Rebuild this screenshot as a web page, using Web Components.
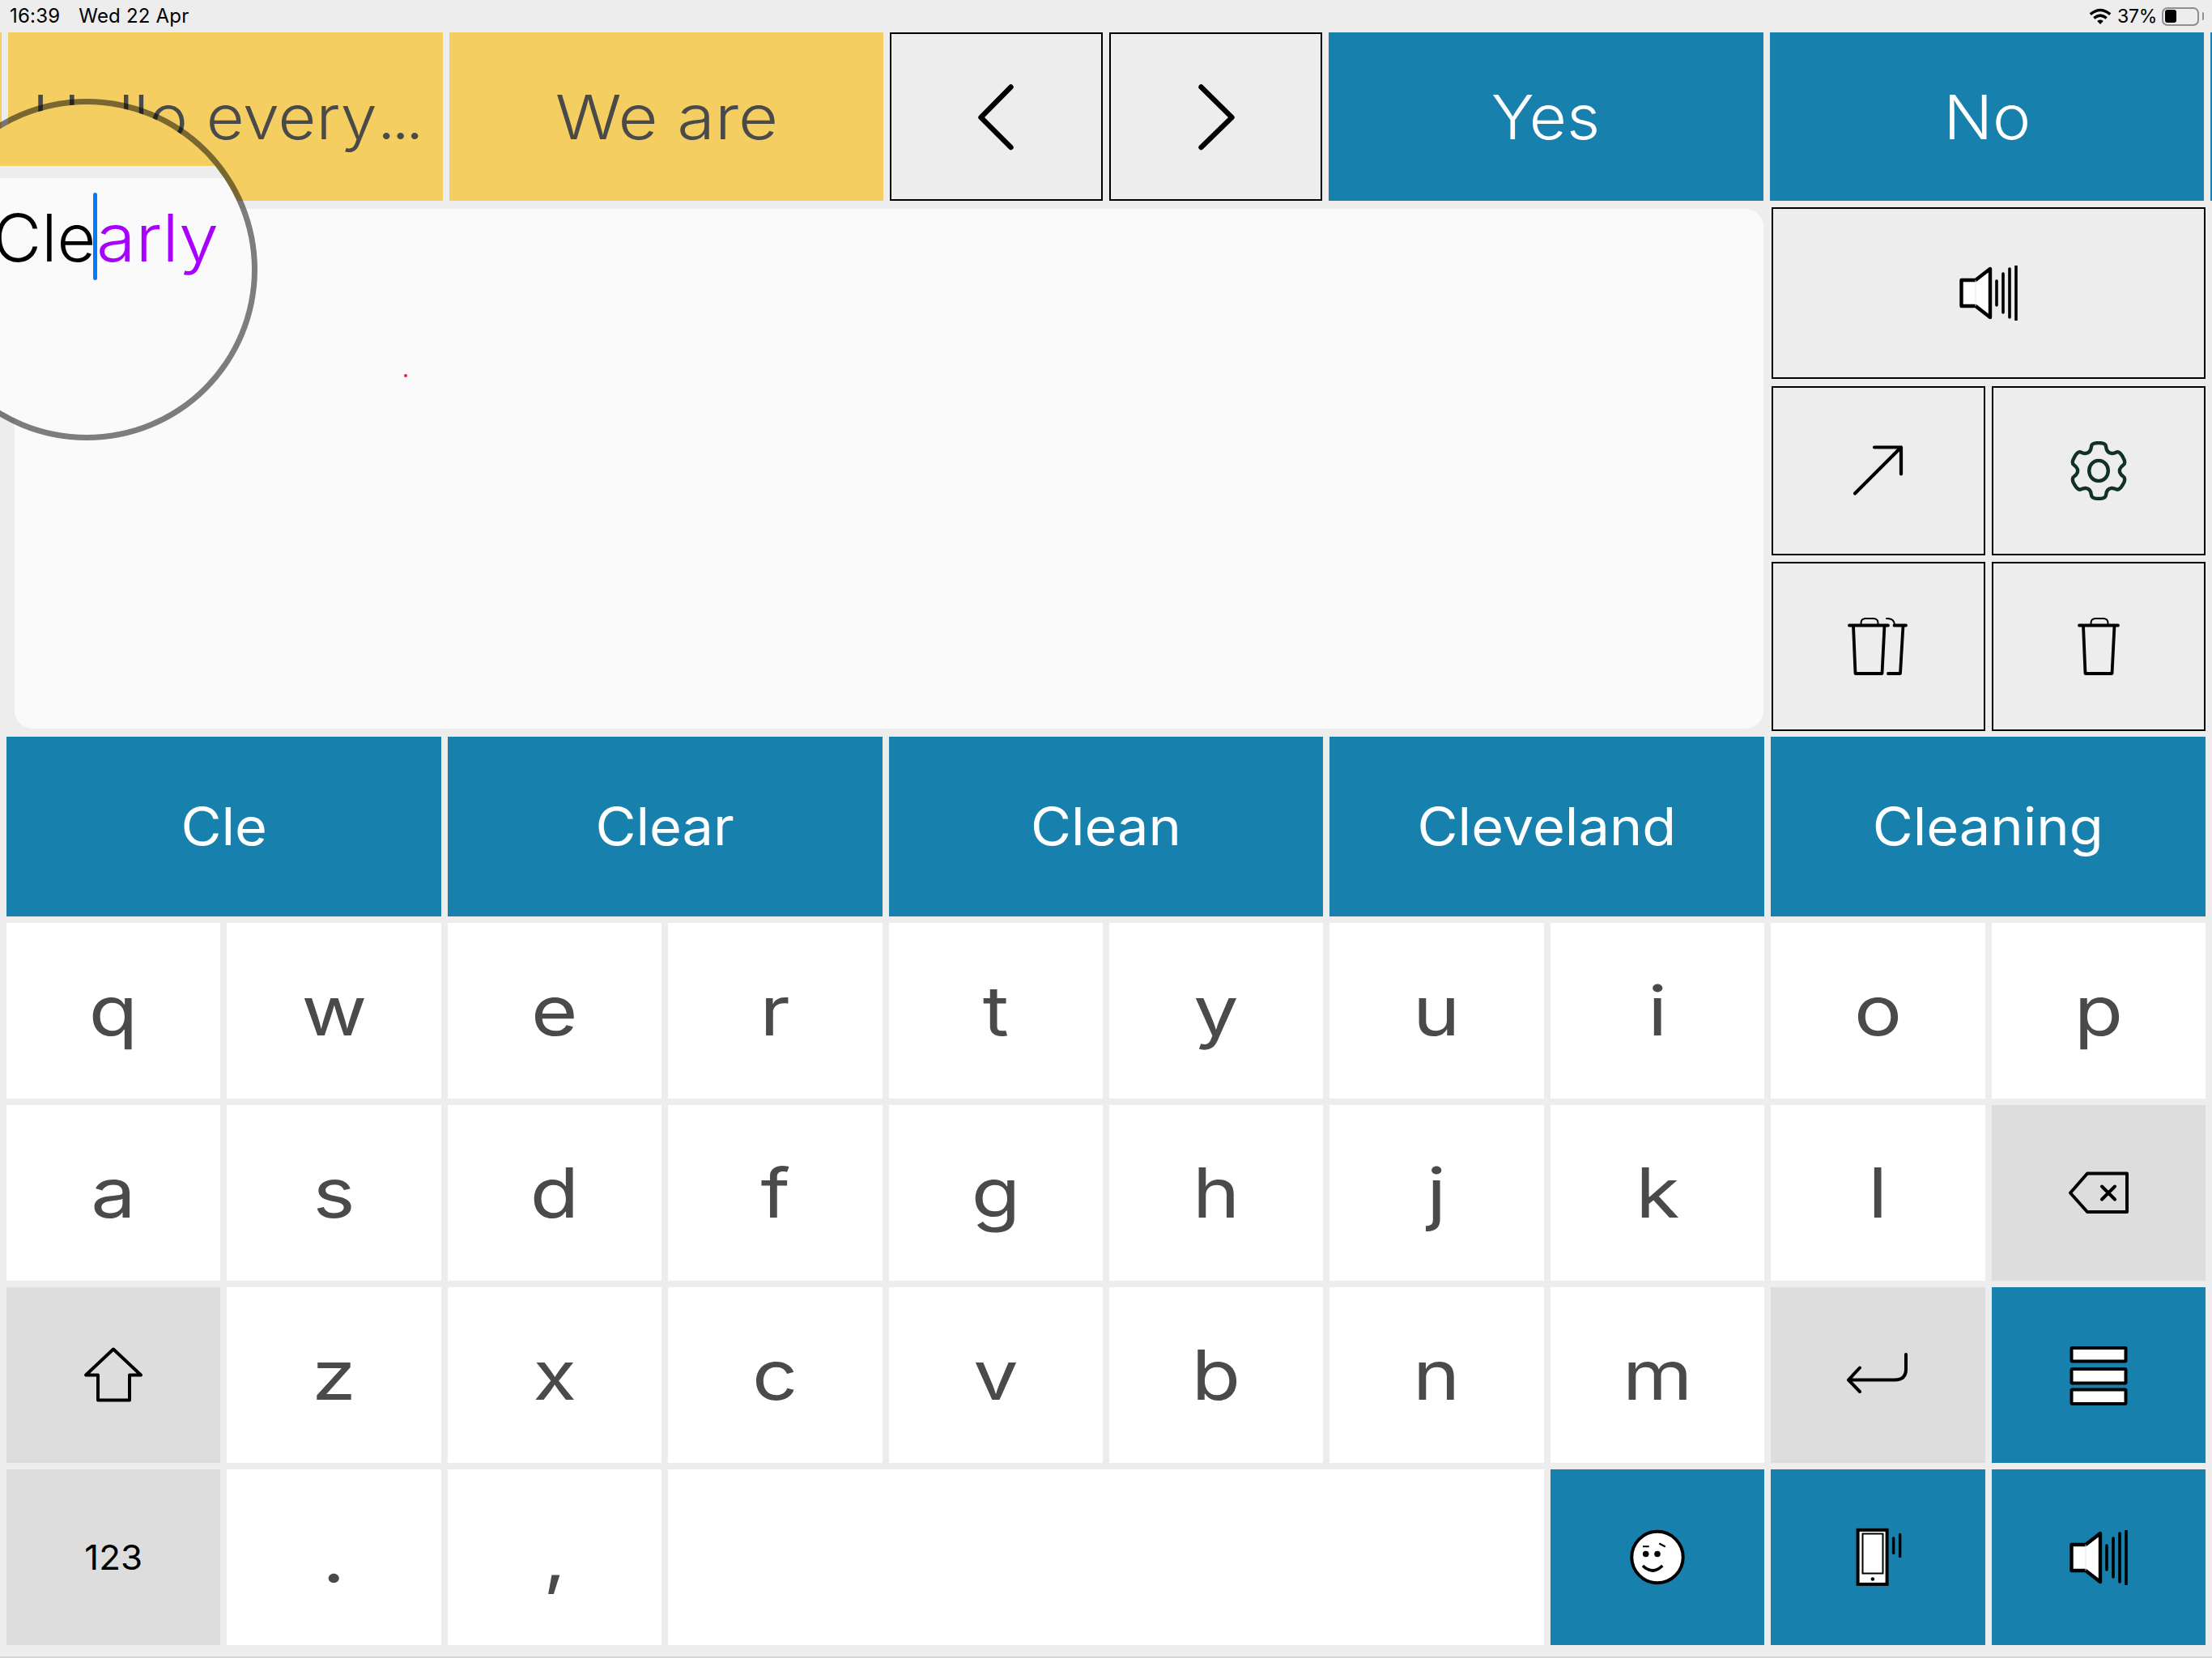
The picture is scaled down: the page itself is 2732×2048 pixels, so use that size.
<!DOCTYPE html>
<html lang="en"><head><meta charset="utf-8"><title>AAC keyboard</title>
<style>
html,body{margin:0;padding:0;background:#ededed}
body{width:2732px;height:2048px;overflow:hidden;position:relative;font-family:Inter,"Noto Sans",sans-serif}
</style></head>
<body>
<aac-app></aac-app>
<script>
function gearPath(cx,cy){
  var pts=[];
  function p(r,deg){var t=(deg-90)*Math.PI/180;return [cx+r*Math.cos(t),cy+r*Math.sin(t)];}
  for(var k=0;k<6;k++){
    var a=k*60;
    pts.push(p(25.5,a-30),p(27.5,a-20),p(35.5,a-14),p(35.5,a+14),p(27.5,a+20));
  }
  var n=pts.length;
  function mid(u,v){return [(u[0]+v[0])/2,(u[1]+v[1])/2];}
  var s=mid(pts[n-1],pts[0]);
  var d='M'+s[0].toFixed(2)+' '+s[1].toFixed(2);
  for(var i=0;i<n;i++){
    var m=mid(pts[i],pts[(i+1)%n]);
    d+='Q'+pts[i][0].toFixed(2)+' '+pts[i][1].toFixed(2)+' '+m[0].toFixed(2)+' '+m[1].toFixed(2);
  }
  return d+'Z';
}
var R='fill="none" stroke="#000" stroke-linecap="round" stroke-linejoin="round"';
var speaker='<path d="M2.5 18H20L38 4V64L20 50H2.5Z" fill="#fff" stroke="#000" stroke-width="4.4" stroke-linejoin="round"/><path d="M20 18V50" stroke="#dfe6ea" stroke-width="1"/><g '+R+' stroke-width="3.6"><path d="M46 19V49M54 10V58M62 4V64M70 1V67"/></g>';
var ICONS={
  left:[52,90,'<path d="M43.5 8.5L6.5 46L43.5 83" '+R+' stroke-width="6.4"/>'],
  right:[52,90,'<path d="M7.5 8.5L45.5 46L7.5 83" '+R+' stroke-width="6.4"/>'],
  speaker:[72,68,speaker],
  arrow:[64,64,'<path d="M27 3.5H60V36.5M60 3.5L3 60.5" '+R+' stroke-width="4.2"/>'],
  gear:[74,73,'<path d="'+gearPath(37,36.5)+'" fill="none" stroke="#10302a" stroke-width="4.4" stroke-linejoin="round"/><ellipse cx="37" cy="36.5" rx="11.8" ry="12.6" fill="none" stroke="#10302a" stroke-width="4.4"/>'],
  trash2:[80,76,'<g '+R+' stroke-width="3.8"><path d="M4 11.5H52M9 11.5L11.5 71H44.5L47.5 11.5"/><path d="M59.5 11.5H74M70.5 11.5L67 71H52"/></g><g '+R+' stroke-width="2"><path d="M18.5 10V8.5Q18.5 3.5 23.5 3H34.5Q39.5 3.5 39.5 8.5V10"/><path d="M50 3Q59 2.5 60 10"/></g>'],
  trash:[56,76,'<g '+R+' stroke-width="3.8"><path d="M4 11.5H52M9 11.5L11.5 71H44.5L47.5 11.5"/></g><path d="M18.5 10V8.5Q18.5 3.5 23.5 3H34.5Q39.5 3.5 39.5 8.5V10" '+R+' stroke-width="2"/>'],
  backspace:[80,58,'<path d="M5 28.5L26 4.5H75V52H26Z" '+R+' stroke-width="4"/><path d="M44 20.5L60 36.5M60 20.5L44 36.5" '+R+' stroke-width="4"/>'],
  shift:[80,76,'<path d="M40 5.5L6 37.5H21V68.5H60V37.5H74Z" '+R+' stroke-width="4"/>'],
  ret:[80,56,'<path d="M75 2V20Q75 33.5 61 33.5H4M18 18.5L4 33.5L18 48" '+R+' stroke-width="4"/>'],
  menu:[72,76,'<g fill="#fff" stroke="#000" stroke-width="4" stroke-linejoin="round"><rect x="2.5" y="4" width="67" height="16.5" rx="1"/><rect x="2.5" y="30" width="67" height="17.4" rx="1"/><rect x="2.5" y="55.5" width="67" height="17.5" rx="1"/></g>'],
  emoji:[72,72,'<circle cx="36" cy="35.5" r="31.7" fill="#fff" stroke="#000" stroke-width="4"/><circle cx="21.7" cy="31.5" r="3.8"/><circle cx="36" cy="31.5" r="3.8"/><path d="M18 22.2H25.7M38.3 18.5L45.7 22.5" fill="none" stroke="#000" stroke-width="2"/><path d="M18 46Q30 58 42.3 46" fill="none" stroke="#000" stroke-width="3.6"/>'],
  phone:[60,76,'<rect x="5.6" y="3.9" width="36" height="67" fill="#fff" stroke="#000" stroke-width="4"/><rect x="11.5" y="8.5" width="25" height="49" fill="#fff" stroke="#000" stroke-width="2"/><circle cx="23.9" cy="64.5" r="2.3"/><path d="M49.6 14V32.5M57.6 9.5V36.5" '+R+' stroke-width="3.5"/>']
};
class AacIcon extends HTMLElement{
  constructor(){super();this.attachShadow({mode:'open'});}
  connectedCallback(){
    var i=ICONS[this.getAttribute('name')];
    this.shadowRoot.innerHTML='<style>:host{display:block;line-height:0}svg{display:block}</style><svg xmlns="http://www.w3.org/2000/svg" width="'+i[0]+'" height="'+i[1]+'" viewBox="0 0 '+i[0]+' '+i[1]+'">'+i[2]+'</svg>';
  }
}
customElements.define('aac-icon',AacIcon);

var tileT=document.createElement('template');
tileT.innerHTML='<style>'
+':host{--sx:1.16;display:flex;align-items:center;justify-content:center;box-sizing:border-box;min-width:0;overflow:hidden;white-space:nowrap;color:#4a4a4a;background:#fff;font:400 85px/1 Inter,"Noto Sans",sans-serif}'
+'.g{display:inline-block;transform:scaleX(var(--sx))}'
+':host([kind=yellow]){--sx:1.115;background:#f4ce60;font-size:76px;font-weight:300}'
+':host([kind=blue]){--sx:1.05;background:#1880ac;color:#fff;font-size:76px;font-weight:300}'
+':host([kind=blue][size=s]){--sx:1.07;font-size:64px;font-weight:400}'
+':host([kind=tool]){--sx:1;background:#ededed;border:2.5px solid #000}'
+':host([kind=grey]){--sx:1;background:#ddd;color:#000}'
+':host([kind=grey][size=n]){--sx:1.02;font-size:43px;font-weight:400}'
+':host([icon]){--sx:1}'
+'</style><span class="g"><slot></slot></span>';
class AacTile extends HTMLElement{
  constructor(){super();this.attachShadow({mode:'open'}).appendChild(tileT.content.cloneNode(true));}
}
customElements.define('aac-tile',AacTile);

class AacStatus extends HTMLElement{
  constructor(){super();this.attachShadow({mode:'open'}).innerHTML='<style>'
  +':host{display:flex;align-items:center;height:40px;box-sizing:border-box;padding:0 10px 0 12px;font:400 24px/1 Inter,Roboto,sans-serif;letter-spacing:.2px;color:#000}'
  +'.date{margin-left:23px}.sp{flex:1}.pct{margin:0 6px 0 7px;font-size:23px;letter-spacing:-.3px}'
  +'.bat{display:flex;align-items:center;box-sizing:border-box;width:46px;height:23px;border:2px solid #8e8e93;border-radius:7px;padding:2px}'
  +'.lvl{width:14px;height:16px;background:#000;border-radius:3px}'
  +'.nub{width:2.5px;height:10px;background:#8e8e93;border-radius:0 2px 2px 0;margin-left:3.5px}'
  +'svg{display:block}</style>'
  +'<span>16:39</span><span class="date">Wed 22 Apr</span><span class="sp"></span>'
  +'<svg width="28" height="20" viewBox="0 0 28 20"><path d="M1.8 7.6Q14 -2.6 26.2 7.6M6.3 12.3Q14 6 21.7 12.3" fill="none" stroke="#000" stroke-width="3.5"/><path d="M10.2 16Q14 13.2 17.8 16L14 20Z"/></svg>'
  +'<span class="pct">37%</span><span class="bat"><span class="lvl"></span></span><span class="nub"></span>';}
}
customElements.define('aac-status',AacStatus);

class AacMagnifier extends HTMLElement{
  constructor(){super();this.attachShadow({mode:'open'}).innerHTML='<style>'
  +':host{position:absolute;left:-104px;top:122px;width:422px;height:422px;box-sizing:border-box;border:7px solid rgba(0,0,0,.5);border-radius:50%;overflow:hidden;background:linear-gradient(#f4ce60 0 76px,#ededed 76px 91px,#fafafa 91px) padding-box;padding:109px 0 0 88px;white-space:nowrap;font:340 81px/108px Inter,"Noto Sans",sans-serif;color:#000}'
  +'.t{display:inline-block;transform-origin:0 50%}.k{transform:scaleX(1.02)}'
  +'.c{display:inline-block;width:5.5px;height:108px;background:#007aff;border-radius:3px;vertical-align:-23px;margin:0 -1px 0 -1px}'
  +'.g{color:#a800ff;transform:scaleX(1.09)}</style><span class="t k">Cle</span><span class="c"></span><span class="t g">arly</span>';}
}
customElements.define('aac-magnifier',AacMagnifier);

class AacStrip extends HTMLElement{
  constructor(){super();this.attachShadow({mode:'open'}).innerHTML='<style>:host{display:grid;height:208px;overflow:hidden;grid-template-columns:2px 537px 536px 263px 263px 537px 536px 2px;column-gap:8px}</style><slot></slot>';}
}
customElements.define('aac-strip',AacStrip);

class AacMiddle extends HTMLElement{
  constructor(){super();this.attachShadow({mode:'open'}).innerHTML='<style>:host{display:flex;height:647px;margin-top:8px;padding:0 8px 0 18px;gap:10px}.t{flex:1;margin:2px 0 3px;background:#fafafa;border-radius:22px;position:relative}'
  +'.dot{position:absolute;left:481px;top:204px;width:3.5px;height:3.5px;border-radius:50%;background:#f3263f}'
  +'.s{display:grid;grid-template-columns:264px 264px;grid-template-rows:212px 209px 209px;gap:8.5px 8px;flex:none}</style>'
  +'<div class="t"><span class="dot"></span></div><div class="s"><slot></slot></div>';}
}
customElements.define('aac-middle',AacMiddle);

class AacKeys extends HTMLElement{
  constructor(){super();this.attachShadow({mode:'open'}).innerHTML='<style>:host{display:grid;grid-template-columns:repeat(10,1fr);grid-template-rows:222px repeat(4,217px);gap:8px;padding:0 8px;margin-top:7px}::slotted(.w2){grid-column:span 2}::slotted(.w4){grid-column:span 4}</style><slot></slot>';}
}
customElements.define('aac-keys',AacKeys);

class AacApp extends HTMLElement{
  constructor(){super();
    var letters=function(s){return s.split('').map(function(c){return '<aac-tile>'+c+'</aac-tile>';}).join('');};
    var icon=function(n,k){return '<aac-tile icon kind="'+k+'"><aac-icon name="'+n+'"></aac-icon></aac-tile>';};
    var sug=function(s){return '<aac-tile class="w2" kind="blue" size="s">'+s+'</aac-tile>';};
    this.attachShadow({mode:'open'}).innerHTML='<style>:host{display:block;position:relative;width:2732px;height:2048px;overflow:hidden}'
    +'.line{height:2px;background:#d5d5de;margin-top:14px}.d{letter-spacing:-5px}</style>'
    +'<aac-status></aac-status>'
    +'<aac-strip><aac-tile kind="yellow"></aac-tile><aac-tile kind="yellow" style="--sx:1.065">Hello every<span class="d">...</span></aac-tile><aac-tile kind="yellow">We are</aac-tile>'
    +icon('left','tool')+icon('right','tool')
    +'<aac-tile kind="blue">Yes</aac-tile><aac-tile kind="blue">No</aac-tile><aac-tile kind="blue"></aac-tile></aac-strip>'
    +'<aac-middle><aac-tile icon kind="tool" style="grid-column:span 2"><aac-icon name="speaker"></aac-icon></aac-tile>'
    +icon('arrow','tool')+icon('gear','tool')+icon('trash2','tool')+icon('trash','tool')+'</aac-middle>'
    +'<aac-keys>'+sug('Cle')+sug('Clear')+sug('Clean')+sug('Cleveland')+sug('Cleaning')
    +letters('qwertyuiopasdfghjkl')+icon('backspace','grey')
    +icon('shift','grey')+letters('zxcvbnm')+icon('ret','grey')+icon('menu','blue')
    +'<aac-tile kind="grey" size="n">123</aac-tile>'+letters('.,')+'<aac-tile class="w4"></aac-tile>'
    +icon('emoji','blue')+icon('phone','blue')+icon('speaker','blue')
    +'</aac-keys><div class="line"></div><aac-magnifier></aac-magnifier>';
  }
}
customElements.define('aac-app',AacApp);
</script>
</body></html>
